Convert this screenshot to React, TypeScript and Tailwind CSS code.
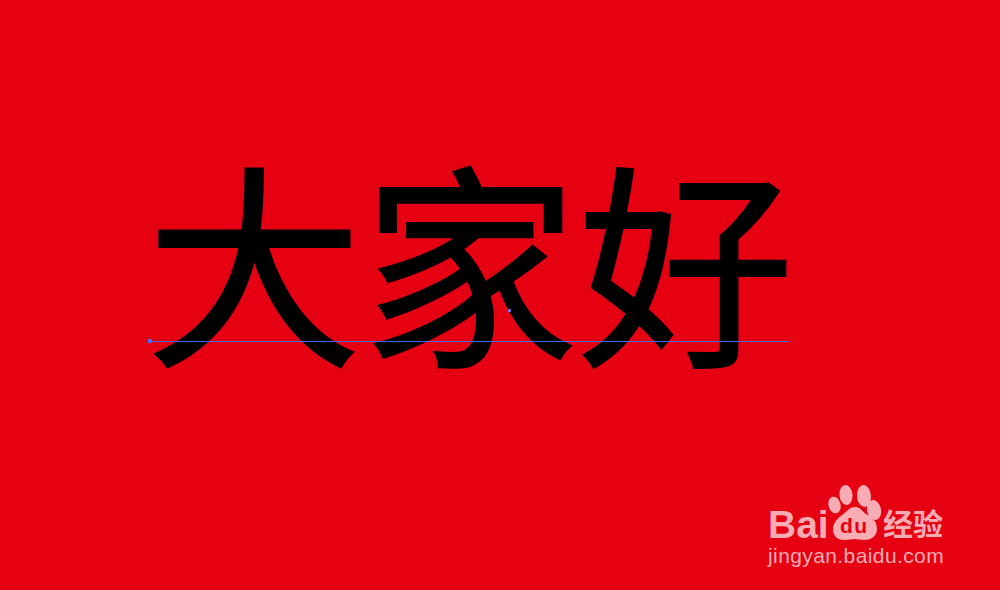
const Watermark = () => (
  <div className="absolute left-[768px] top-[484px] flex w-[180px] flex-col text-[#f9acb3]">
    <div className="flex items-end">
      <span className="w-[60px] text-[39px] leading-[30px] font-bold font-['Liberation_Sans',sans-serif]">Bai</span>
      <div className="relative h-[56px] w-[55px]">
        <svg width="55" height="56" viewBox="0 0 55 56" fill="currentColor">
          <ellipse cx="6.5" cy="21" rx="6" ry="8.5" transform="rotate(-15 6.5 21)" />
          <ellipse cx="18" cy="11" rx="6.5" ry="10" transform="rotate(-6 18 11)" />
          <ellipse cx="36" cy="12" rx="7" ry="11" transform="rotate(-4 36 12)" />
          <ellipse cx="46" cy="26" rx="7" ry="10" transform="rotate(-12 46 26)" />
          <path d="M27 23c5 0 7 4 11 7 6 3 11 7 11 15 0 8-7 11-13 11-4 0-6-1-9-1s-6 1-10 1c-7 0-12-3-12-11 0-6 5-11 9-14 5-3 7-8 13-8z" />
        </svg>
        <span className="absolute left-[12px] top-[30px] text-[21px] leading-[24px] font-semibold tracking-[1.5px] text-[#e60012] font-['Liberation_Sans',sans-serif]">du</span>
      </div>
      <span className="mb-[3px] text-[30px] leading-[30px] font-bold font-['Noto_Sans_CJK_SC',sans-serif]">经验</span>
    </div>
    <span className="mt-[4px] whitespace-nowrap text-[21px] leading-[24px] tracking-[0.4px] font-['Liberation_Sans',sans-serif]">jingyan.baidu.com</span>
  </div>
);

export default function App() {
  return (
    <div className="relative h-[590px] w-[1000px] overflow-hidden bg-[#e50012]">
      <div className="pl-[146px] pt-[128px]">
        <h1 className="text-[216px] leading-[256px] font-normal text-black whitespace-nowrap [-webkit-text-stroke:2px_black] font-['Noto_Sans_CJK_SC',sans-serif]">
          大家好
        </h1>
      </div>
      {/* guide line left over from the drawing tool */}
      <div className="absolute left-[148px] top-[339px] size-[4px] bg-[#3f6fff]" />
      <div className="absolute left-[150px] top-[341px] h-px w-[639px] bg-[#3f6ae8]" />
      <div className="absolute left-[508px] top-[309px] size-[3px] bg-[#7a6fd8]" />
      <Watermark />
    </div>
  );
}
